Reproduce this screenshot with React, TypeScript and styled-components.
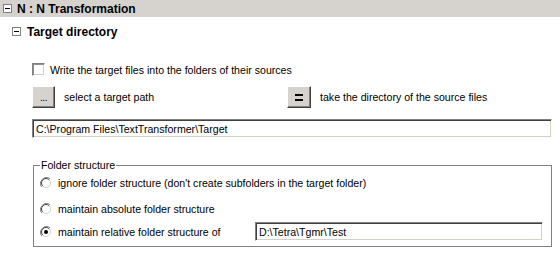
import React from 'react'
import styled, { createGlobalStyle } from 'styled-components'

const GlobalStyle = createGlobalStyle`
    body {
        margin:0;
        background:#ffffff;
        font-family:"Liberation Sans", Arial, sans-serif;
        font-size:10.6px;
        color:#000000;
    }
`

const Page = styled.div`
    width:560px;
    height:255px;
    background:#ffffff;
    overflow:hidden;
`

const HeaderBar = styled.div`
    height:17px;
    background:#d6d3ce;
    display:flex;
    align-items:center;
    padding-left:3px;
    gap:5px;
`

const Title = styled.div`
    font-weight:700;
    font-size:12px;
    line-height:14px;
`

const SectionRow = styled.div`
    height:17px;
    margin-top:6px;
    display:flex;
    align-items:center;
    padding-left:12px;
    gap:6px;
`

const MinusBox = styled.span`
    width:9px;
    height:9px;
    box-sizing:border-box;
    border:1px solid #808080;
    background:#ffffff;
    display:flex;
    align-items:center;
    justify-content:center;
    flex-shrink:0;
    &::after {
        content:'';
        width:5px;
        height:1px;
        background:#000000;
    }
`

const Content = styled.div`
    padding-left:32px;
    width:520px;
`

const CheckRow = styled.div`
    margin-top:23px;
    height:13px;
    display:flex;
    align-items:center;
    gap:5px;
`

const CheckBox = styled.span`
    width:13px;
    height:13px;
    box-sizing:border-box;
    background:#ffffff;
    border:1px solid;
    border-color:#808080 #ffffff #ffffff #808080;
    box-shadow:inset 1px 1px #909090, inset -1px -1px #d4d0c8;
`

const ButtonRow = styled.div`
    margin-top:10px;
    height:22px;
    display:grid;
    grid-template-columns:255px 1fr;
`

const ButtonCell = styled.div`
    display:flex;
    align-items:center;
    gap:9px;
`

const ClassicButton = styled.div<{ $width: number }>`
    width:${p => p.$width}px;
    height:22px;
    box-sizing:border-box;
    background:#d6d3ce;
    border:1px solid;
    border-color:#ffffff #404040 #404040 #ffffff;
    box-shadow:inset -1px -1px #808080;
    display:flex;
    align-items:center;
    justify-content:center;
    font-size:10px;
    letter-spacing:-0.5px;
`

const EqualsSign = styled.span`
    width:8px;
    height:7px;
    box-sizing:border-box;
    border-top:2px solid #000000;
    border-bottom:2px solid #000000;
`

const TextField = styled.div<{ $width: number }>`
    width:${p => p.$width}px;
    height:19px;
    box-sizing:border-box;
    background:#ffffff;
    border:1px solid;
    border-color:#808080 #ffffff #ffffff #808080;
    box-shadow:inset 1px 1px #404040, inset -1px -1px #d4d0c8;
    display:flex;
    align-items:center;
    padding-left:3px;
    white-space:nowrap;
`

const PathField = styled(TextField)`
    margin-top:11px;
`

const GroupBox = styled.fieldset`
    margin:21px 0 0 1px;
    width:519px;
    box-sizing:border-box;
    border:1px solid #808080;
    padding:0 6px 5px 6px;
    display:flex;
    flex-direction:column;
`

const GroupLegend = styled.legend`
    padding:0 1px;
    line-height:13px;
`

const RadioRow = styled.div<{ $height: number, $gap: number }>`
    height:${p => p.$height}px;
    margin-top:${p => p.$gap}px;
    display:flex;
    align-items:center;
`

const RadioLabel = styled.div<{ $width?: number }>`
    display:flex;
    align-items:center;
    gap:6px;
    width:${p => p.$width ? `${p.$width}px` : 'auto'};
    flex-shrink:0;
`

const Radio: React.FC<{ checked?: boolean }> = ({ checked }) => (
    <svg width="12" height="12" viewBox="0 0 12 12">
        <path d="M10.2 1.8 A6 6 0 0 0 1.8 10.2" fill="none" stroke="#808080" strokeWidth="1" />
        <path d="M10.2 1.8 A6 6 0 0 1 1.8 10.2" fill="none" stroke="#ffffff" strokeWidth="1" />
        <circle cx="6" cy="6" r="4.5" fill="#ffffff" />
        <path d="M9.2 2.8 A4.5 4.5 0 0 0 2.8 9.2" fill="none" stroke="#404040" strokeWidth="1" />
        <path d="M9.2 2.8 A4.5 4.5 0 0 1 2.8 9.2" fill="none" stroke="#d4d0c8" strokeWidth="1" />
        {checked && <circle cx="6" cy="6" r="2" fill="#000000" />}
    </svg>
)

const App: React.FC = () => {
    return <Page>
        <GlobalStyle />
        <HeaderBar>
            <MinusBox />
            <Title>N : N Transformation</Title>
        </HeaderBar>
        <SectionRow>
            <MinusBox />
            <Title>Target directory</Title>
        </SectionRow>
        <Content>
            <CheckRow>
                <CheckBox />
                <span>Write the target files into the folders of their sources</span>
            </CheckRow>
            <ButtonRow>
                <ButtonCell>
                    <ClassicButton $width={23}>...</ClassicButton>
                    <span>select a target path</span>
                </ButtonCell>
                <ButtonCell>
                    <ClassicButton $width={24}><EqualsSign /></ClassicButton>
                    <span>take the directory of the source files</span>
                </ButtonCell>
            </ButtonRow>
            <PathField $width={520}>C:\Program Files\TextTransformer\Target</PathField>
            <GroupBox>
                <GroupLegend>Folder structure</GroupLegend>
                <RadioRow $height={22} $gap={0}>
                    <RadioLabel>
                        <Radio />
                        <span>ignore folder structure (don't create subfolders in the target folder)</span>
                    </RadioLabel>
                </RadioRow>
                <RadioRow $height={22} $gap={4}>
                    <RadioLabel>
                        <Radio />
                        <span>maintain absolute folder structure</span>
                    </RadioLabel>
                </RadioRow>
                <RadioRow $height={19} $gap={2}>
                    <RadioLabel $width={215}>
                        <Radio checked />
                        <span>maintain relative folder structure of</span>
                    </RadioLabel>
                    <TextField $width={288}>D:\Tetra\Tgmr\Test</TextField>
                </RadioRow>
            </GroupBox>
        </Content>
    </Page>
}

export default App
